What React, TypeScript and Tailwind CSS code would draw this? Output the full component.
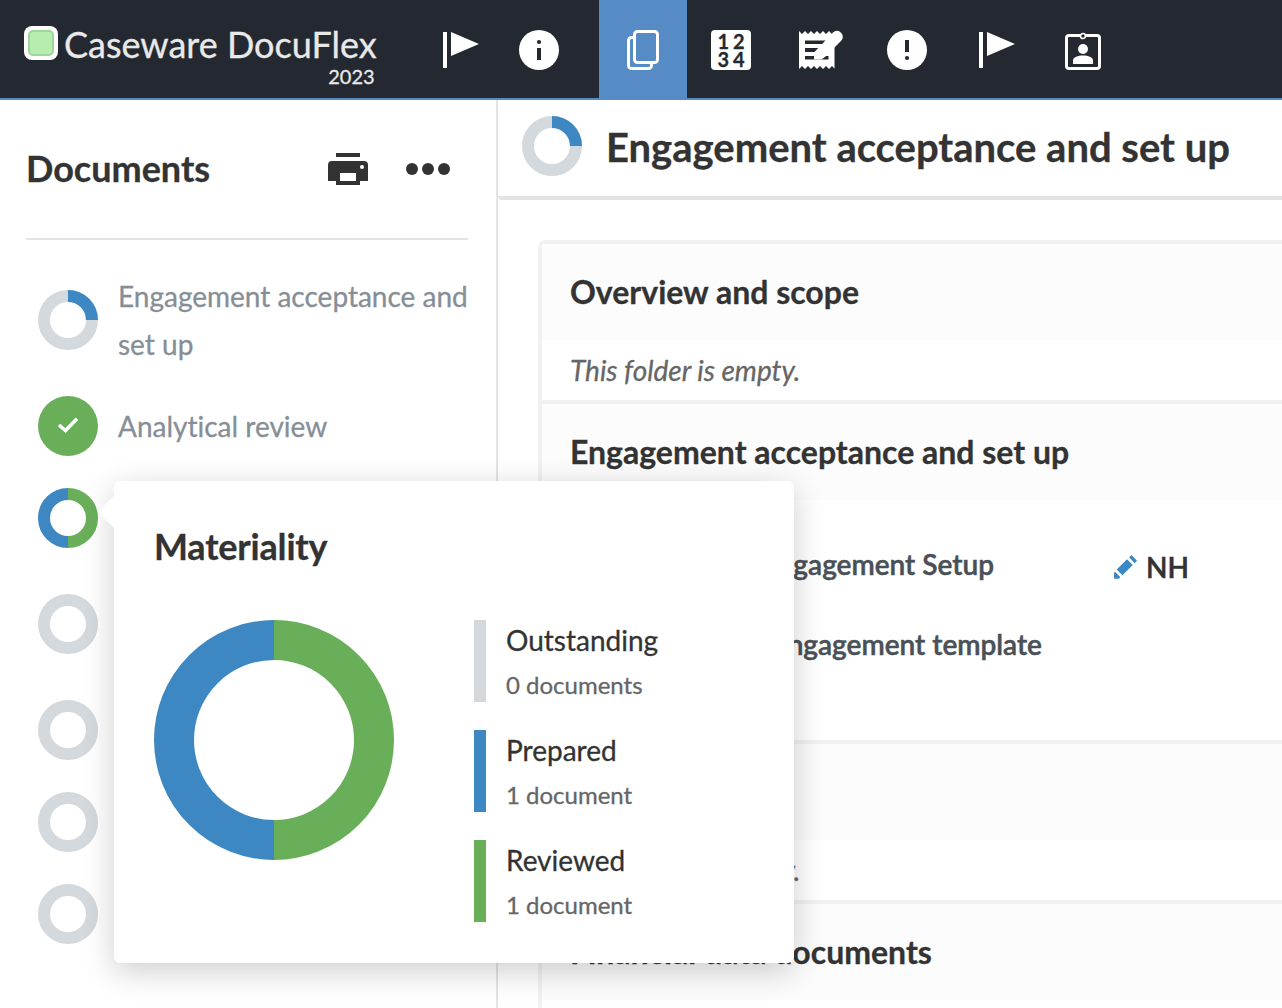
import React from "react";

const BLUE = "#3d88c2";
const GREEN = "#69af5a";
const GRAY = "#d4d9de";

type Slice = { from: number; to: number; color: string };

function Donut({ size, thickness, slices = [] }: { size: number; thickness: number; slices?: Slice[] }) {
  const r = (size - thickness) / 2;
  const c = size / 2;
  const point = (t: number) => {
    const a = t * 2 * Math.PI - Math.PI / 2;
    return `${c + r * Math.cos(a)} ${c + r * Math.sin(a)}`;
  };
  const covered = slices.reduce((sum, s) => sum + s.to - s.from, 0) >= 1;
  return (
    <svg width={size} height={size} className="block shrink-0">
      {!covered && <circle cx={c} cy={c} r={r} fill="none" stroke={GRAY} strokeWidth={thickness} />}
      {slices.map((s) => (
        <path
          key={s.from}
          d={`M${point(s.from)} A${r} ${r} 0 0 1 ${point(s.to)}`}
          fill="none"
          stroke={s.color}
          strokeWidth={thickness}
        />
      ))}
    </svg>
  );
}

const QUARTER: Slice[] = [{ from: 0, to: 0.25, color: BLUE }];
const HALVES: Slice[] = [
  { from: 0, to: 0.5, color: GREEN },
  { from: 0.5, to: 1, color: BLUE },
];

function FlagIcon() {
  return (
    <svg width="36" height="36" viewBox="0 0 36 36" fill="#fff">
      <path d="M0 0h4v36H0zM8 0l28 12L8 24z" />
    </svg>
  );
}

function InfoIcon() {
  return (
    <svg width="40" height="40" viewBox="0 0 40 40">
      <circle cx="20" cy="20" r="20" fill="#fff" />
      <circle cx="20" cy="12" r="2.1" fill="#242931" />
      <path d="M18 18h4v12h-4z" fill="#242931" />
    </svg>
  );
}

function AlertIcon() {
  return (
    <svg width="40" height="40" viewBox="0 0 40 40">
      <circle cx="20" cy="20" r="20" fill="#fff" />
      <circle cx="20" cy="28" r="2.1" fill="#242931" />
      <path d="M18 10h4v12h-4z" fill="#242931" />
    </svg>
  );
}

function CopyIcon() {
  return (
    <svg width="32" height="40" viewBox="0 0 32 40" fill="none" stroke="#fff" strokeWidth="3">
      <rect x="7.500" y="1.500" width="23" height="31" rx="3" />
      <path d="M7 7.500H4.500a3 3 0 0 0-3 3v25a3 3 0 0 0 3 3h17a3 3 0 0 0 3-3V33" />
    </svg>
  );
}

function ReceiptEditIcon() {
  return (
    <svg width="45" height="40" viewBox="0 0 45 40">
      <path
        d="M0 1L3 4L6 1L9 4L12 1L15 4L18 1L21 4L24 1L27 4L30 1L33 4L35.500 1.500V38.500L33 36L30 39L27 36L24 39L21 36L18 39L15 36L12 39L9 36L6 39L3 36L0 39z"
        fill="#fff"
      />
      <path d="M6 10.500h23V14H6zM6 18h18v4H6zM6 26h23.500v3.500H6z" fill="#242931" />
      <path
        d="M34 2.500a5.500 5.500 0 0 1 8 .2 5.500 5.500 0 0 1 .2 8L26.500 26.500 22.500 29.500H15V22.500L25 12z"
        fill="#fff"
      />
    </svg>
  );
}

function BadgeIcon() {
  return (
    <svg width="36" height="38" viewBox="0 0 36 38">
      <rect x="1.500" y="3.500" width="33" height="33" rx="2.500" fill="none" stroke="#fff" strokeWidth="3" />
      <circle cx="18" cy="4" r="2.500" fill="#242931" stroke="#fff" strokeWidth="1.700" />
      <circle cx="18" cy="17" r="5" fill="#fff" />
      <path d="M8 32v-3.500c0-3.500 5-5 10-5s10 1.500 10 5V32z" fill="#fff" />
    </svg>
  );
}

function PrinterIcon() {
  return (
    <svg width="40" height="32" viewBox="0 0 40 32">
      <path d="M8 0h24v4H8zM4 8h32a4 4 0 0 1 4 4v16h-8v4H8v-4H0V12a4 4 0 0 1 4-4z" fill="#333" />
      <path d="M12 20h16v8H12z" fill="#fff" />
      <circle cx="34" cy="14" r="2" fill="#fff" />
    </svg>
  );
}

function PencilIcon() {
  return (
    <svg width="23" height="24" viewBox="0 0 23 24" fill={BLUE}>
      <path d="M15.200 2.300L17.500 0 23 5.800 20.500 8.200zM13 4.200l5.800 5.800L8.400 20.200 2.700 14.600zM0 18l1-1.300L6.200 22 5 23.700H0z" />
    </svg>
  );
}

function Header() {
  return (
    <header className="flex h-[100px] shrink-0 border-b-2 border-[#568bc5] bg-[#242931]">
      <div className="flex w-[443px] shrink-0 pl-6 pt-[26px]">
        <div className="flex size-[34px] items-center justify-center rounded-[8px] bg-white">
          <div className="size-[26px] rounded-[5px] border-2 border-[#9fd599] bg-[#b7edae]" />
        </div>
        <div className="ml-[6px] -mt-[7px] flex flex-col items-end text-[#e9e9e9]">
          <div className="h-[46px] whitespace-nowrap text-[36px] leading-[50px]">Caseware DocuFlex</div>
          <div className="mr-[2px] text-[20px] leading-[22px]">2023</div>
        </div>
      </div>
      <nav className="flex h-[98px] items-center text-white">
        <div className="mt-[2px]"><FlagIcon /></div>
        <div className="ml-10 mt-[2px]"><InfoIcon /></div>
        <div className="ml-10 flex h-full w-[88px] items-center justify-center bg-[#568bc5] pt-[2px]">
          <CopyIcon />
        </div>
        <div className="ml-6 mt-[2px] flex size-10 flex-col items-center rounded-[4px] bg-white pt-[2px] text-[20px] font-bold leading-[18px] text-[#242931]">
          <span className="flex gap-[4px]"><span>1</span><span>2</span></span>
          <span className="flex gap-[4px]"><span>3</span><span>4</span></span>
        </div>
        <div className="ml-12 mt-[2px]"><ReceiptEditIcon /></div>
        <div className="ml-[43px] mt-[2px]"><AlertIcon /></div>
        <div className="ml-[52px] mt-[2px]"><FlagIcon /></div>
        <div className="ml-[50px] mt-1"><BadgeIcon /></div>
      </nav>
    </header>
  );
}

function SidebarItem({ label, tall, children }: { label?: string; tall?: boolean; children: React.ReactNode }) {
  return (
    <li className={tall ? "flex h-24 items-center" : "flex h-[68px] items-center"}>
      {children}
      {label && <span className="ml-5 w-[356px] text-[28px] leading-[48px] text-[#868e96]">{label}</span>}
    </li>
  );
}

function Sidebar() {
  return (
    <aside className="w-[498px] shrink-0 border-r-2 border-[#e4e4e4]">
      <div className="ml-[26px] flex h-[140px] w-[442px] items-center border-b-2 border-[#e4e4e4]">
        <h2 className="w-[302px] pb-[2px] text-[36px] font-bold leading-[40px] text-[#333]">Documents</h2>
        <PrinterIcon />
        <svg width="44" height="12" className="ml-[38px]" fill="#333">
          <circle cx="6" cy="6" r="6" />
          <circle cx="22" cy="6" r="6" />
          <circle cx="38" cy="6" r="6" />
        </svg>
      </div>
      <ul className="ml-[38px] mt-8 flex flex-col gap-6">
        <SidebarItem label="Engagement acceptance and set up" tall>
          <Donut size={60} thickness={12} slices={QUARTER} />
        </SidebarItem>
        <SidebarItem label="Analytical review">
          <svg width="60" height="60" className="shrink-0">
            <circle cx="30" cy="30" r="30" fill={GREEN} />
            <path d="M21 29l6.500 5.500L39 22.800" fill="none" stroke="#fff" strokeWidth="3.500" />
          </svg>
        </SidebarItem>
        <SidebarItem><Donut size={60} thickness={12} slices={HALVES} /></SidebarItem>
        <SidebarItem tall><Donut size={60} thickness={12} /></SidebarItem>
        <SidebarItem><Donut size={60} thickness={12} /></SidebarItem>
        <SidebarItem><Donut size={60} thickness={12} /></SidebarItem>
        <SidebarItem><Donut size={60} thickness={12} /></SidebarItem>
      </ul>
    </aside>
  );
}

function FolderHeader({ title }: { title?: string }) {
  return (
    <h3 className="flex h-24 items-center bg-[#fcfcfc] pl-7 text-[32px] font-bold leading-[40px] text-[#333]">
      {title}
    </h3>
  );
}

function EmptyFolder() {
  return <p className="h-[60px] pl-7 text-[28px] italic leading-[60px] text-[#666]">This folder is empty.</p>;
}

function Main() {
  return (
    <main className="flex min-w-0 flex-1 flex-col">
      <div className="flex h-[100px] shrink-0 items-center rounded-bl-[4px] border-b-4 border-[#e4e4e4] pl-6">
        <div className="-mt-1"><Donut size={60} thickness={12} slices={QUARTER} /></div>
        <h1 className="ml-6 whitespace-nowrap pb-[2px] text-[40px] font-bold leading-[44px] text-[#333]">
          Engagement acceptance and set up
        </h1>
      </div>
      <div className="ml-10 mt-10 flex-1 rounded-tl-[8px] border-l-4 border-t-4 border-[#f0f1f3]">
        <section className="border-b-4 border-[#f0f1f3]">
          <FolderHeader title="Overview and scope" />
          <EmptyFolder />
        </section>
        <section className="border-b-4 border-[#f0f1f3]">
          <FolderHeader title="Engagement acceptance and set up" />
          <div className="h-[240px] pt-[24px] text-[28px] font-semibold text-[#495057] [-webkit-text-stroke:0.5px]">
            <div className="flex h-20 items-center">
              <span className="w-[452px] text-right">Engagement Setup</span>
              <span className="ml-[120px] mt-[5px]"><PencilIcon /></span>
              <span className="ml-[9px] mt-[5px] text-[#333]">NH</span>
            </div>
            <div className="flex h-20 items-center">
              <span className="w-[500px] text-right">Engagement template</span>
            </div>
          </div>
        </section>
        <section className="border-b-4 border-[#f0f1f3]">
          <FolderHeader />
          <EmptyFolder />
        </section>
        <FolderHeader title="Financial data documents" />
      </div>
    </main>
  );
}

function LegendRow({ bar, title, count }: { bar: string; title: string; count: string }) {
  return (
    <div className="flex h-[82px]">
      <div className={`w-3 ${bar}`} />
      <div className="ml-5">
        <div className="text-[28px] leading-[41px] text-[#333]">{title}</div>
        <div className="text-[24px] leading-[48px] text-[#666]">{count}</div>
      </div>
    </div>
  );
}

function MaterialityPopover() {
  return (
    <div className="absolute left-[114px] top-[481px] h-[482px] w-[680px] rounded-[6px] bg-white px-10 pt-[43px] shadow-[0_8px_32px_rgba(0,0,0,0.2)]">
      <svg width="16" height="32" className="absolute -left-4 top-[15px]">
        <path d="M16 0v32L0 16z" fill="#fff" />
      </svg>
      <h2 className="text-[36px] font-bold leading-[44px] tracking-[-0.18px] text-[#333]">Materiality</h2>
      <div className="mt-[52px] flex">
        <Donut size={240} thickness={40} slices={HALVES} />
        <div className="ml-20 flex flex-col gap-7">
          <LegendRow bar="bg-[#d4d9de]" title="Outstanding" count="0 documents" />
          <LegendRow bar="bg-[#3d88c2]" title="Prepared" count="1 document" />
          <LegendRow bar="bg-[#69af5a]" title="Reviewed" count="1 document" />
        </div>
      </div>
    </div>
  );
}

export default function App() {
  return (
    <div className="relative flex h-[1008px] w-[1282px] flex-col overflow-hidden bg-white font-['Lato',sans-serif] [font-variant-ligatures:none] [-webkit-text-stroke:0.3px]">
      <Header />
      <div className="flex min-h-0 flex-1">
        <Sidebar />
        <Main />
      </div>
      <MaterialityPopover />
    </div>
  );
}
